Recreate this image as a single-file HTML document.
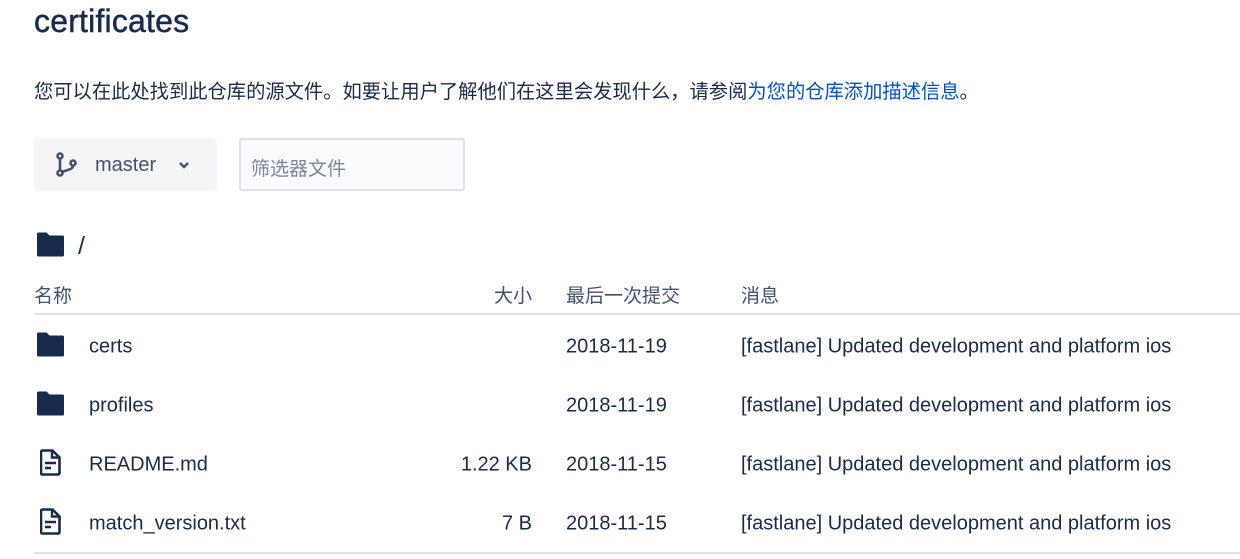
<!DOCTYPE html>
<html><head><meta charset="utf-8"><style>
body{margin:0;width:1240px;height:559px;overflow:hidden;background:#fff;font-family:"Liberation Sans","Noto Sans CJK SC",sans-serif;color:#172B4D;position:relative}
.a{position:absolute;white-space:nowrap}
h1{position:absolute;left:34px;top:3px;margin:0;font-size:32px;font-weight:normal;letter-spacing:0.2px;-webkit-text-stroke:0.5px #172B4D}
.row{position:absolute;left:0;width:1240px;height:59px;font-size:20px}
.row span{position:absolute;top:50%;transform:translateY(-50%)}
</style></head><body>
<h1>certificates</h1>
<div class="a" style="left:34px;top:76px;font-size:19.3px">您可以在此处找到此仓库的源文件。如要让用户了解他们在这里会发现什么，请参阅<span style="color:#0052CC">为您的仓库添加描述信息</span>。</div>
<div class="a" style="left:34px;top:138px;width:183px;height:53px;background:#F4F5F7;border-radius:4px"></div>
<svg class="a" style="left:55px;top:152px" width="24" height="26" viewBox="0 0 24 26"><g fill="none" stroke="#42526E" stroke-width="2.6"><circle cx="5" cy="4" r="2.5"/><circle cx="5" cy="21" r="2.5"/><circle cx="18" cy="11" r="2.5"/><path d="M5 6.5v12M18 13.5c0 4-5 4-11 6.5"/></g></svg>
<div class="a" style="left:95px;top:154px;font-size:20px;color:#42526E">master</div>
<svg class="a" style="left:178px;top:160px" width="12" height="10" viewBox="0 0 12 10"><path d="M2 3l4 4 4-4" fill="none" stroke="#42526E" stroke-width="2.4"/></svg>
<div class="a" style="left:239px;top:138px;width:222px;height:49px;background:#FAFBFC;border:2px solid #DFE1E6;border-radius:3px"></div>
<div class="a" style="left:251px;top:154px;font-size:19px;color:#7A869A">筛选器文件</div>
<svg class="a" style="left:36px;top:232px" width="29" height="25" viewBox="0 0 29 25"><path d="M1 2a1.5 1.5 0 0 1 1.5-1.5h8l3 3h13a1.5 1.5 0 0 1 1.5 1.5v18a1.5 1.5 0 0 1-1.5 1.5h-24A1.5 1.5 0 0 1 1 23z" fill="#172B4D"/></svg>
<div class="a" style="left:78px;top:232px;font-size:25px">/</div>
<div class="a" style="left:34px;top:281px;font-size:19px;color:#42526E">名称</div>
<div class="a" style="left:494px;top:281px;font-size:19px;color:#42526E">大小</div>
<div class="a" style="left:566px;top:281px;font-size:19px;color:#42526E">最后一次提交</div>
<div class="a" style="left:741px;top:281px;font-size:19px;color:#42526E">消息</div>
<div class="a" style="left:34px;top:313px;width:1206px;height:2px;background:#DFE1E6"></div>

<div class="row" style="top:317px">
<svg class="a" style="left:36px;top:15px" width="29" height="25" viewBox="0 0 29 25"><path d="M1 2a1.5 1.5 0 0 1 1.5-1.5h8l3 3h13a1.5 1.5 0 0 1 1.5 1.5v18a1.5 1.5 0 0 1-1.5 1.5h-24A1.5 1.5 0 0 1 1 23z" fill="#172B4D"/></svg>
<span style="left:89px">certs</span><span style="left:566px">2018-11-19</span><span style="left:741px">[fastlane] Updated development and platform ios</span></div>
<div class="row" style="top:376px">
<svg class="a" style="left:36px;top:15px" width="29" height="25" viewBox="0 0 29 25"><path d="M1 2a1.5 1.5 0 0 1 1.5-1.5h8l3 3h13a1.5 1.5 0 0 1 1.5 1.5v18a1.5 1.5 0 0 1-1.5 1.5h-24A1.5 1.5 0 0 1 1 23z" fill="#172B4D"/></svg>
<span style="left:89px">profiles</span><span style="left:566px">2018-11-19</span><span style="left:741px">[fastlane] Updated development and platform ios</span></div>
<div class="row" style="top:435px">
<svg class="a" style="left:40px;top:14px" width="22" height="27" viewBox="0 0 22 27"><path d="M2.5 1.5h10l7 7v15.5a1.5 1.5 0 0 1-1.5 1.5H2.5A1.5 1.5 0 0 1 1 24V3a1.5 1.5 0 0 1 1.5-1.5z" fill="none" stroke="#172B4D" stroke-width="2.6"/><path d="M12 1.5v7h7.5" fill="none" stroke="#172B4D" stroke-width="2.4"/><path d="M5 14h11M5 19h6" stroke="#172B4D" stroke-width="2.6"/></svg>
<span style="left:89px">README.md</span><span style="right:708px">1.22 KB</span><span style="left:566px">2018-11-15</span><span style="left:741px">[fastlane] Updated development and platform ios</span></div>
<div class="row" style="top:494px">
<svg class="a" style="left:40px;top:14px" width="22" height="27" viewBox="0 0 22 27"><path d="M2.5 1.5h10l7 7v15.5a1.5 1.5 0 0 1-1.5 1.5H2.5A1.5 1.5 0 0 1 1 24V3a1.5 1.5 0 0 1 1.5-1.5z" fill="none" stroke="#172B4D" stroke-width="2.6"/><path d="M12 1.5v7h7.5" fill="none" stroke="#172B4D" stroke-width="2.4"/><path d="M5 14h11M5 19h6" stroke="#172B4D" stroke-width="2.6"/></svg>
<span style="left:89px">match_version.txt</span><span style="right:708px">7 B</span><span style="left:566px">2018-11-15</span><span style="left:741px">[fastlane] Updated development and platform ios</span></div>
<div class="a" style="left:34px;top:552px;width:1206px;height:2px;background:#DFE1E6"></div>
</body></html>
